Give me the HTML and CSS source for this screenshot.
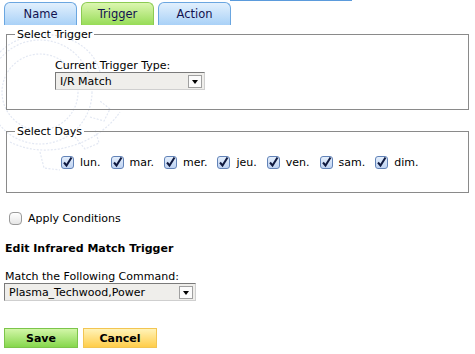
FILE: index.html
```html
<!DOCTYPE html>
<html lang="fr">
<head>
    <meta charset="UTF-8">
    <meta name="viewport" content="width=device-width, initial-scale=1.0">
    <title>Edit Trigger</title>
    <link rel="stylesheet" href="styles.css">
</head>
<body>
    <!-- faint background watermark -->
    <svg class="watermark" width="180" height="170" viewBox="0 0 180 170">
        <g fill="none" stroke="#e3e8f3" stroke-width="1.2" stroke-dasharray="2 1.5">
            <circle cx="60" cy="80" r="52"/>
            <circle cx="60" cy="80" r="38"/>
            <path d="M20 40 C50 10, 110 20, 120 60"/>
            <path d="M30 130 C70 150, 120 130, 140 100"/>
            <path d="M95 125 l10 12 l14 -6 l-4 -14"/>
            <path d="M110 105 l14 4 l6 -12 l-10 -8"/>
            <path d="M60 140 l4 16 l16 2"/>
            <path d="M10 95 C0 70, 5 50, 20 40"/>
        </g>
    </svg>

    <div class="tab-bar">
        <div class="tab">Name</div>
        <div class="tab tab-active">Trigger</div>
        <div class="tab tab-last">Action</div>
        <div class="tab-line"></div>
    </div>

    <fieldset class="box box-trigger">
        <legend>Select Trigger</legend>
        <label class="field-label" for="trigger-type">Current Trigger Type:</label>
        <select id="trigger-type" class="dropdown dropdown-trigger">
            <option>I/R Match</option>
        </select>
    </fieldset>

    <fieldset class="box box-days">
        <legend>Select Days</legend>
        <div class="days">
            <label class="day"><input type="checkbox" class="check" checked> lun.</label>
            <label class="day"><input type="checkbox" class="check" checked> mar.</label>
            <label class="day"><input type="checkbox" class="check" checked> mer.</label>
            <label class="day"><input type="checkbox" class="check" checked> jeu.</label>
            <label class="day"><input type="checkbox" class="check" checked> ven.</label>
            <label class="day"><input type="checkbox" class="check" checked> sam.</label>
            <label class="day"><input type="checkbox" class="check" checked> dim.</label>
        </div>
    </fieldset>

    <label class="conditions"><input type="checkbox" class="check check-plain"> Apply Conditions</label>

    <h4 class="section-title">Edit Infrared Match Trigger</h4>

    <label class="field-label" for="command">Match the Following Command:</label>
    <select id="command" class="dropdown dropdown-command">
        <option>Plasma_Techwood,Power</option>
    </select>

    <div class="buttons">
        <button class="btn btn-save">Save</button>
        <button class="btn btn-cancel">Cancel</button>
    </div>
</body>
</html>
```

FILE: styles.css
```css
body {
    margin: 0;
    padding: 0 4px;
    position: relative;
    font-family: "DejaVu Sans", Verdana, sans-serif;
    font-size: 11px;
    line-height: 13px;
    color: #000;
    background: #fff;
}

.watermark {
    position: absolute;
    left: -20px;
    top: 12px;
    z-index: -1;
}

/* tabs */
.tab-bar {
    display: flex;
    gap: 4px;
    height: 25px;
    align-items: flex-end;
    position: relative;
}

.tab {
    width: 71px;
    height: 22px;
    border: 1px solid #6aa6e0;
    border-bottom: none;
    border-radius: 6px 6px 0 0;
    background: linear-gradient(#e2f0fd, #a9d1f7);
    color: #121250;
    text-align: center;
    line-height: 22px;
    font-size: 11.5px;
}

.tab-active {
    border-color: #8ccb52;
    background: linear-gradient(#dcf6b0, #97dc57);
}

.tab-line {
    position: absolute;
    left: 226px;
    top: 0;
    width: 122px;
    height: 1px;
    background: #5b9bdc;
}

/* fieldsets */
.box {
    margin: 3px 2px 0 2px;
    padding: 0 8px 0 48px;
    border: 1px solid #8a8a8a;
}

.box legend {
    padding: 0 2px;
    margin-left: -40px;
}

.box-trigger {
    padding-top: 18px;
    padding-bottom: 19px;
}

.box-days {
    margin-top: 15px;
    padding-top: 18px;
    padding-bottom: 23px;
}

.field-label {
    display: block;
}

.dropdown {
    display: block;
    appearance: none;
    -webkit-appearance: none;
    height: 18px;
    margin: 0;
    padding: 0 0 0 4px;
    border: 1px solid #cfcfcf;
    border-top-color: #7a7a7a;
    border-left-color: #7a7a7a;
    border-radius: 0;
    background-color: #efeeeb;
    background-image: url("data:image/svg+xml;utf8,<svg xmlns='http://www.w3.org/2000/svg' width='14' height='13'><rect x='0.5' y='0.5' width='13' height='12' fill='%23fbfbfb' stroke='%23a0a0a0'/><path d='M4 5h6l-3 4z' fill='%23000'/></svg>");
    background-repeat: no-repeat;
    background-position: right 2px center;
    font-family: inherit;
    font-size: 11px;
    color: #000;
}

.dropdown-trigger {
    width: 150px;
}

.dropdown-command {
    width: 192px;
    margin-top: 0;
}

/* checkboxes */
.days {
    display: flex;
    gap: 10px;
    margin-left: 6px;
}

.day,
.conditions {
    display: flex;
    align-items: center;
    gap: 6px;
}

.check {
    appearance: none;
    -webkit-appearance: none;
    width: 13px;
    height: 13px;
    margin: 0;
    border: 1px solid #6283b8;
    border-radius: 3px;
    background: linear-gradient(#e4eefb, #bfd3f2);
}

.check:checked {
    background-image: url("data:image/svg+xml;utf8,<svg xmlns='http://www.w3.org/2000/svg' width='11' height='11'><path d='M2 5.5l2.5 3l5-8' fill='none' stroke='%23101a40' stroke-width='2'/></svg>"), linear-gradient(#e4eefb, #bfd3f2);
    background-repeat: no-repeat;
    background-position: center;
}

.check-plain {
    border-color: #9a9a9a;
    border-radius: 4px;
    background: linear-gradient(#ffffff, #e6e6e6);
}

.conditions {
    margin: 19px 0 0 5px;
}

.section-title {
    margin: 17px 0 15px 1px;
    font-size: 11px;
    line-height: 13px;
}

.conditions + .section-title + .field-label {
    margin-left: 1px;
}

/* buttons */
.buttons {
    display: flex;
    gap: 5px;
    margin-top: 27px;
}

.btn {
    width: 74px;
    height: 20px;
    padding: 0;
    font-family: inherit;
    font-size: 11px;
    font-weight: bold;
    color: #000;
    cursor: pointer;
}

.btn-save {
    border: 1px solid #7cc54a;
    background: linear-gradient(#d2f6a8, #86d74c);
}

.btn-cancel {
    border: 1px solid #f2c552;
    background: linear-gradient(#fff3b8, #ffcd4a);
}
```
